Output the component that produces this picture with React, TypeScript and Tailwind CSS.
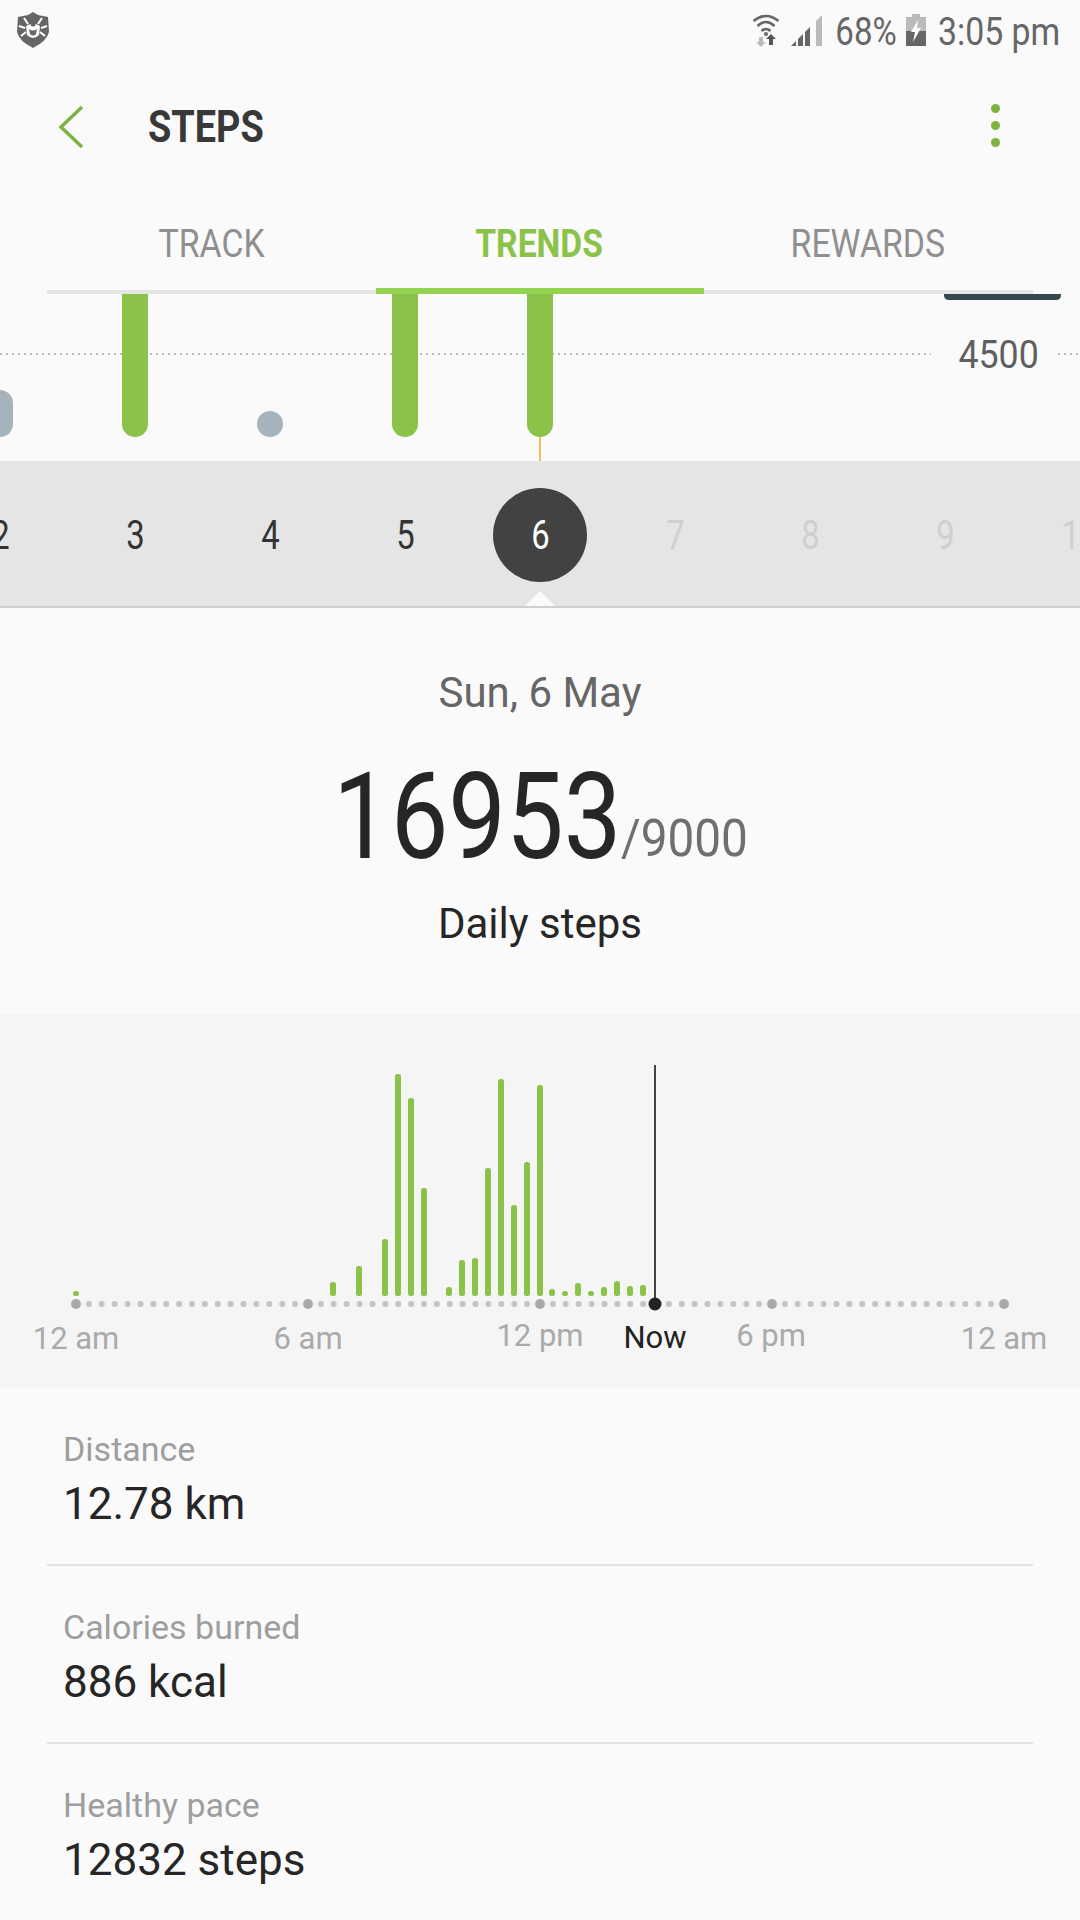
const font = { fontFamily: "Roboto, sans-serif" }

const hourBars: [number, number][] = [
  [76, 5], [333, 14], [359, 30], [385, 57], [398, 222], [411, 198], [424, 108],
  [449, 9], [462, 36], [475, 38], [488, 128], [501, 217], [514, 91], [527, 134], [540, 211],
  [552, 7], [565, 5], [578, 13], [591, 5], [604, 9], [617, 15], [630, 10], [643, 11],
]

const axisLabels = [
  { label: "12 am", x: 76, y: 1338, dark: false },
  { label: "6 am", x: 308, y: 1338, dark: false },
  { label: "12 pm", x: 540, y: 1335, dark: false },
  { label: "Now", x: 655, y: 1337, dark: true },
  { label: "6 pm", x: 771, y: 1335, dark: false },
  { label: "12 am", x: 1004, y: 1338, dark: false },
]

const days = [2, 3, 4, 5, 6, 7, 8, 9, 10]

const stats = [
  { label: "Distance", value: "12.78 km" },
  { label: "Calories burned", value: "886 kcal" },
  { label: "Healthy pace", value: "12832 steps" },
]

function DrWebShield() {
  return (
    <svg width="34" height="36" viewBox="0 0 34 36">
      <path d="M17 0 L22 3 L32 5 L33 20 Q31 29 17 36 Q3 29 1 20 L2 5 L12 3 Z" fill="#666" />
      <g stroke="#fff" strokeWidth="2" fill="none">
        <path d="M12 12 L8 6 M22 12 L26 6 M9 16 L3 14 M25 16 L31 14 M10 20 L5 24 M24 20 L29 24" />
      </g>
      <path d="M10 14 Q17 9 24 14 L23 23 Q17 29 11 23 Z" fill="#fff" />
      <path d="M13 17 Q17 20 21 17 L20 22 Q17 25 14 22 Z" fill="#666" />
      <circle cx="17" cy="12" r="2.5" fill="#666" />
    </svg>
  )
}

function StatusIcons() {
  return (
    <>
      <svg width="28" height="34" viewBox="0 0 28 34" className="mr-[11px]">
        <g fill="none" stroke="#666" strokeWidth="2.6">
          <path d="M1.5 8 Q14 -2 26.5 8" />
          <path d="M5.5 13 Q14 5 22.5 13" />
          <path d="M9.5 18 Q14 14 18.5 18" />
        </g>
        <circle cx="14" cy="21" r="2" fill="#666" />
        <path d="M7 24h4v5h3l-5 5-5-5h3z" fill="#bbb" />
        <path d="M19 21l5 5h-3v6h-4v-6h-3z" fill="#555" />
      </svg>
      <svg width="31" height="32" viewBox="0 0 31 32" className="mr-[8px]">
        <path d="M0 32 L5 27 V32 Z" fill="#666" />
        <path d="M7 25 L12 20 V32 H7 Z" fill="#666" />
        <path d="M14 18 L19 13 V32 H14 Z" fill="#666" />
        <path d="M25 7 L31 1 V32 H25 Z" fill="#bbb" />
      </svg>
    </>
  )
}

function BatteryIcon() {
  return (
    <svg width="20" height="32" viewBox="0 0 20 32">
      <path d="M6 0h8v3h6v29H0V3h6z" fill="#bbb" />
      <path d="M0 17h20v15H0z" fill="#666" />
      <path d="M12 6 L5 18 H9 L7 28 L15 14 H11 Z" fill="#fff" />
    </svg>
  )
}

function TrendBars() {
  return (
    <svg width="1080" height="167" viewBox="0 0 1080 167" className="block">
      <line x1="0" y1="60" x2="931" y2="60" stroke="#bdbdbd" strokeWidth="2" strokeDasharray="2 4" />
      <line x1="1058" y1="60" x2="1080" y2="60" stroke="#bdbdbd" strokeWidth="2" strokeDasharray="2 4" />
      <rect x="-13" y="96" width="26" height="47" rx="13" fill="#a5b4bc" />
      <circle cx="270" cy="130" r="13" fill="#a5b4bc" />
      {[135, 405, 540].map((x) => (
        <path
          key={x}
          d={`M${x - 13} 0 H${x + 13} V130 A13 13 0 0 1 ${x - 13} 130 Z`}
          fill="#8bc34a"
        />
      ))}
      <line x1="540" y1="143" x2="540" y2="167" stroke="#efa81f" strokeWidth="1.5" />
      <path d="M944 0 H1061 V1 Q1061 6 1056 6 H949 Q944 6 944 1 Z" fill="#37474f" />
    </svg>
  )
}

function HourChart() {
  const dots = Array.from({ length: 73 }, (_, i) => 76 + (i * 928) / 72)
  return (
    <svg width="1080" height="300" viewBox="0 1014 1080 300" className="block">
      {dots.map((x, i) =>
        i % 18 === 0 ? (
          <circle key={i} cx={x} cy="1304" r="5" fill="#aaaaaa" />
        ) : (
          <circle key={i} cx={x} cy="1304" r="3" fill="#c4c4c4" />
        )
      )}
      {hourBars.map(([x, h]) => (
        <rect key={x} x={x - 3} y={1296 - h} width="6" height={h} rx="2.5" fill="#8bc34a" />
      ))}
      <rect x="654" y="1065" width="2" height="239" fill="#444" />
      <circle cx="655" cy="1304" r="6.5" fill="#222" />
    </svg>
  )
}

export default function App() {
  return (
    <div className="relative h-[1920px] w-[1080px] overflow-hidden bg-[#fafafa]" style={font}>
      {/* status bar */}
      <div className="flex h-[60px] items-center justify-between pl-[16px] pr-[20px] text-[#666]">
        <DrWebShield />
        <div className="flex items-center">
          <StatusIcons />
          <span className="inline-block w-[72px] origin-center scale-x-[0.87] pt-[4px] text-center text-[38px] leading-none">68%</span>
          <div className="ml-[4px] mr-[12px]"><BatteryIcon /></div>
          <span className="inline-block w-[122px] origin-left scale-x-[0.89] whitespace-nowrap pt-[4px] text-[38px] leading-none">3:05 pm</span>
        </div>
      </div>

      {/* title */}
      <div className="relative flex h-[134px] items-center">
        <svg width="26" height="44" viewBox="0 0 26 44" className="ml-[58px] mr-[64px]">
          <path d="M24 2 L3 22 L24 42" fill="none" stroke="#7cb342" strokeWidth="3.5" />
        </svg>
        <h1 className="origin-left scale-x-[0.86] text-[44px] font-bold leading-none text-[#383838]">STEPS</h1>
        <div className="absolute left-[991px] top-[44px] flex flex-col gap-[8px]">
          <span className="h-[9px] w-[9px] rounded-full bg-[#7cb342]" />
          <span className="h-[9px] w-[9px] rounded-full bg-[#7cb342]" />
          <span className="h-[9px] w-[9px] rounded-full bg-[#7cb342]" />
        </div>
      </div>

      {/* tabs */}
      <div className="mx-[47px] grid h-[100px] grid-cols-3 border-b-4 border-[#e5e5e5] text-[38px] leading-none">
        <div className="flex items-center justify-center pt-[4px] text-[#8f8f8f]">
          <span className="scale-x-[0.89]">TRACK</span>
        </div>
        <div className="z-10 -mb-[4px] flex items-center justify-center border-b-[6px] border-[#93d34f] pr-[2px] pt-[6px] font-bold text-[#8bc34a]">
          <span className="scale-x-[0.886]">TRENDS</span>
        </div>
        <div className="flex items-center justify-center pr-[2px] pt-[4px] text-[#8f8f8f]">
          <span className="scale-x-[0.89]">REWARDS</span>
        </div>
      </div>

      {/* trend chart */}
      <div className="relative h-[167px]">
        <TrendBars />
        <span className="absolute left-[956px] top-[41px] inline-block w-[80px] scale-x-[0.94] text-center text-[38px] leading-[40px] text-[#5f5f5f]">4500</span>
      </div>

      {/* day strip */}
      <div className="relative flex h-[147px] items-start justify-center overflow-hidden border-b-2 border-[#cfcfcf] bg-[#e5e5e5]">
        {days.map((d) => (
          <div key={d} className="mt-[26px] flex h-[96px] w-[135px] shrink-0 items-center justify-center">
            {d === 6 ? (
              <span className="flex h-[94px] w-[94px] items-center justify-center rounded-full bg-[#424242]">
                <span className="scale-x-[0.8] pl-[1px] pt-[1px] text-[41px] leading-none text-white">6</span>
              </span>
            ) : (
              <span className={d > 6 ? "scale-x-[0.8] pl-[1px] text-[41px] leading-none text-[#cfcfcf]" : "scale-x-[0.8] pl-[1px] text-[41px] leading-none text-[#333]"}>
                {d}
              </span>
            )}
          </div>
        ))}
        <svg width="36" height="17" viewBox="0 0 36 17" className="absolute bottom-[-2px] left-[522px]">
          <path d="M18 0 L35 17 H1 Z" fill="#fafafa" />
        </svg>
      </div>

      {/* summary */}
      <div className="flex h-[406px] flex-col items-center">
        <p className="mt-[62px] text-[42px] leading-[46px] text-[#666]">Sun, 6 May</p>
        <div className="mt-[36px] flex h-[130px] items-end justify-center">
          <div className="w-[288px]">
            <span className="inline-block origin-left scale-x-[0.855] text-[120px] leading-[130px] text-[#262626]">16953</span>
          </div>
          <div className="w-[126px]">
            <span className="inline-block origin-left scale-x-[0.917] pb-[13px] text-[52px] leading-[60px] text-[#6f6f6f]">/9000</span>
          </div>
        </div>
        <p className="mt-[19px] text-[42px] leading-[46px] text-[#262626]">Daily steps</p>
      </div>

      {/* hourly chart */}
      <div className="relative h-[374px] bg-[#f5f5f5]">
        <HourChart />
        {axisLabels.map((a) => (
          <span
            key={a.x + a.label}
            className={a.dark ? "absolute -translate-x-1/2 -translate-y-1/2 whitespace-nowrap text-[31px] leading-none text-[#222]" : "absolute -translate-x-1/2 -translate-y-1/2 whitespace-nowrap text-[31px] leading-none text-[#aaa]"}
            style={{ left: a.x, top: a.y - 1014 }}
          >
            {a.label}
          </span>
        ))}
      </div>

      {/* stats */}
      <div className="px-[47px]">
        {stats.map((s, i) => (
          <div key={s.label} className={i < 2 ? "h-[178px] border-b-2 border-[#e2e2e2] pl-[16px] pt-[40px]" : "h-[178px] pl-[16px] pt-[40px]"}>
            <p className="text-[34px] leading-[42px] text-[#9e9e9e]">{s.label}</p>
            <p className="mt-[8px] text-[44px] leading-[52px] text-[#262626]">{s.value}</p>
          </div>
        ))}
      </div>
    </div>
  )
}
